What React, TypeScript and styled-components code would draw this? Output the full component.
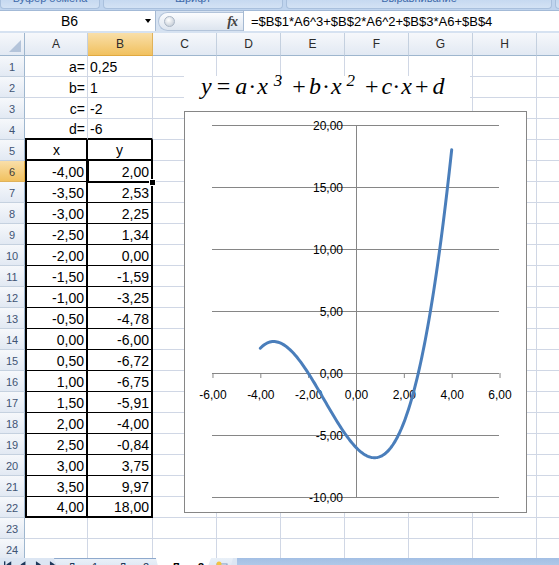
import React from "react";
import styled, { createGlobalStyle, css } from "styled-components";

const GRID = "#d0d7e5";
const CHART_LINE = "#868686";

const GlobalStyle = createGlobalStyle`
  html, body {
    margin: 0;
    padding: 0;
    width: 559px;
    height: 565px;
    overflow: hidden;
    background: #fff;
  }
  body {
    font-family: "Liberation Sans", Arial, sans-serif;
  }
`;

const Window = styled.div`
  width: 559px;
  height: 565px;
  overflow: hidden;
  display: flex;
  flex-direction: column;
  background: #fff;
`;

/* ---------- ribbon group labels (cut off at the top) ---------- */

const RibbonStrip = styled.div`
  flex: none;
  height: 11px;
  display: flex;
  gap: 3px;
  box-sizing: border-box;
  overflow: hidden;
  background: #bfd4ee;
  border-bottom: 1px solid #a3bad7;
`;

const RibbonGroup = styled.div<{ $w: number }>`
  flex: none;
  width: ${(p) => p.$w}px;
  height: 9px;
  box-sizing: border-box;
  border: 1px solid #a9c0dd;
  border-top: none;
  border-radius: 0 0 4px 4px;
  background: linear-gradient(#c6d9f0, #d3e2f4);
  color: #3e6aaa;
  font-size: 11px;
  text-align: center;
  overflow: hidden;
`;

const RibbonLabel = styled.span`
  display: block;
  margin-top: -8px;
  line-height: 13px;
  white-space: nowrap;
`;

/* ---------- formula bar ---------- */

const FormulaBar = styled.div`
  flex: none;
  height: 22px;
  display: flex;
  box-sizing: border-box;
  padding-bottom: 2px;
  background: #d6e2f1;
`;

const NameBox = styled.div`
  flex: none;
  width: 156px;
  display: flex;
  align-items: center;
  background: #fff;
  border-right: 1px solid #a5b9d2;
  box-sizing: border-box;
  font-size: 14px;
`;

const NameText = styled.span`
  width: 139px;
  text-align: center;
`;

const DropArrow = styled.span`
  width: 0;
  height: 0;
  margin-left: 6px;
  border-left: 3.5px solid transparent;
  border-right: 3.5px solid transparent;
  border-top: 4px solid #000;
`;

const Capsule = styled.div`
  flex: none;
  width: 85px;
  margin: 1px 0 0 2px;
  display: flex;
  align-items: center;
  justify-content: space-between;
  box-sizing: border-box;
  padding: 0 6px 0 5px;
  border: 1px solid #b3c4da;
  border-right: none;
  border-radius: 10px 0 0 10px;
  background: linear-gradient(#fbfcfe, #dde5ef);
`;

const Knob = styled.span`
  width: 9px;
  height: 9px;
  border-radius: 50%;
  background: radial-gradient(circle at 40% 35%, #ffffff, #b9c3cf);
  border: 1px solid #aab6c5;
`;

const FxMark = styled.span`
  font-family: "Liberation Serif", "Times New Roman", serif;
  font-style: italic;
  font-weight: bold;
  font-size: 14px;
  color: #444;
  letter-spacing: -1px;
`;

const FormulaInput = styled.div`
  flex: 1;
  display: flex;
  align-items: center;
  padding-left: 7px;
  background: #fff;
  border-left: 1px solid #a5b9d2;
  font-size: 13px;
  white-space: nowrap;
  overflow: hidden;
`;

/* ---------- sheet grid ---------- */

const SheetArea = styled.div`
  position: relative;
  flex: none;
  height: 525px;
  overflow: hidden;
`;

const Grid = styled.div`
  display: grid;
  grid-template-columns: 25px 63px 65px repeat(6, 64px) 60px;
  grid-template-rows: 23px;
  grid-auto-rows: 21px;
  width: max-content;
`;

const headBg = css<{ $active?: boolean }>`
  background: ${(p) =>
    p.$active
      ? "linear-gradient(#f9dfa9, #f1c15f)"
      : "linear-gradient(#f6f8fb, #e2e9f3)"};
`;

const Corner = styled.div`
  position: relative;
  box-sizing: border-box;
  border-right: 1px solid #9eb6ce;
  border-bottom: 1px solid #9eb6ce;
  background: linear-gradient(#f6f8fb, #e2e9f3);
  display: flex;
  align-items: flex-end;
  justify-content: flex-end;
  padding: 0 3px 3px 0;
`;

const ColHead = styled.div<{ $active?: boolean }>`
  ${headBg};
  box-sizing: border-box;
  display: flex;
  align-items: center;
  justify-content: center;
  font-size: 12px;
  color: #2b2b2b;
  border-right: 1px solid ${(p) => (p.$active ? "#e0b25a" : "#c4d0df")};
  border-bottom: 1px solid ${(p) => (p.$active ? "#e0a940" : "#9eb6ce")};
`;

const RowHead = styled.div<{ $active?: boolean }>`
  ${headBg};
  box-sizing: border-box;
  display: flex;
  align-items: center;
  justify-content: center;
  padding-top: 1px;
  font-size: 11px;
  color: ${(p) => (p.$active ? "#3a3a3a" : "#3f5474")};
  border-right: 1px solid ${(p) => (p.$active ? "#e0a940" : "#9eb6ce")};
  border-bottom: 1px solid ${(p) => (p.$active ? "#e0b25a" : "#c5d1df")};
`;

type Edge = "grid" | "thin" | "thick";

const edge = (e?: Edge) =>
  e === "thick" ? "2px solid #000" : e === "thin" ? "1px solid #000" : `1px solid ${GRID}`;

const Cell = styled.div<{
  $align?: "left" | "right" | "center";
  $left?: boolean;
  $right?: Edge;
  $bottom?: Edge;
  $active?: boolean;
}>`
  position: relative;
  box-sizing: border-box;
  display: flex;
  align-items: flex-end;
  justify-content: ${(p) =>
    p.$align === "right" ? "flex-end" : p.$align === "center" ? "center" : "flex-start"};
  padding: 0 2px 1px 2px;
  font-size: 14px;
  line-height: 16px;
  color: #000;
  white-space: nowrap;
  border-left: ${(p) => (p.$left ? "2px solid #000" : "none")};
  border-right: ${(p) => edge(p.$right)};
  border-bottom: ${(p) => edge(p.$bottom)};

  ${(p) =>
    p.$active &&
    css`
      &::after {
        content: "";
        position: absolute;
        top: -2px;
        left: -1px;
        right: -2px;
        bottom: -2px;
        border: 2px solid #000;
        box-shadow: inset 0 0 0 1px #fff;
      }
      &::before {
        content: "";
        position: absolute;
        right: -5px;
        bottom: -5px;
        width: 5px;
        height: 5px;
        background: #000;
        border: 1px solid #fff;
        z-index: 1;
      }
    `}
`;

/* ---------- floating objects ---------- */

const Equation = styled.div`
  position: absolute;
  left: 184px;
  top: 43px;
  width: 286px;
  height: 35px;
  box-sizing: border-box;
  padding-left: 17px;
  background: #fff;
  font-family: "Liberation Serif", "Times New Roman", serif;
  font-style: italic;
  font-size: 24px;
  line-height: 20px;
  color: #000;
  white-space: nowrap;
`;

const Sym = styled.span<{ $gap?: number; $upright?: boolean }>`
  margin-left: ${(p) => p.$gap ?? 0}px;
  font-style: ${(p) => (p.$upright ? "normal" : "italic")};
`;

const Sup = styled.span<{ $gap?: number }>`
  margin-left: ${(p) => p.$gap ?? 0}px;
  font-size: 17px;
  position: relative;
  top: -8px;
`;

const ChartBox = styled.div`
  position: absolute;
  left: 184px;
  top: 78px;
  width: 343px;
  height: 402px;
  box-sizing: border-box;
  border: 1px solid ${CHART_LINE};
  background: #fff;
`;

/* ---------- sheet tabs ---------- */

const TabsBar = styled.div`
  flex: none;
  height: 20px;
  display: flex;
  align-items: flex-start;
  background: linear-gradient(#a3bfe4, #c5d8f0);
`;

const TabsLeft = styled.div`
  flex: none;
  display: flex;
  align-items: flex-start;
  height: 20px;
  background: #dce6f3;
  padding-right: 4px;
`;

const NavGroup = styled.div`
  display: flex;
  gap: 8px;
  width: 58px;
  padding: 2px 0 0 4px;
  box-sizing: border-box;
  border-right: 1px solid #9db3d1;
  height: 20px;
`;

const Tab = styled.div<{ $active?: boolean }>`
  width: 55px;
  margin-left: -4px;
  height: 18px;
  box-sizing: border-box;
  padding: 2px 0 0 ${(p) => (p.$active ? 16 : 14)}px;
  font-size: 11px;
  font-weight: ${(p) => (p.$active ? "bold" : "normal")};
  color: ${(p) => (p.$active ? "#000" : "#1e395b")};
  background: ${(p) => (p.$active ? "#fff" : "linear-gradient(#e9f0f8, #d2dff0)")};
  clip-path: polygon(0 0, 100% 0, 88% 100%, 8% 100%);
  border-top: 1px solid ${(p) => (p.$active ? "#fff" : "#8ea9cd")};
  position: relative;
  z-index: ${(p) => (p.$active ? 2 : 1)};
`;

const NewTab = styled.div`
  width: 24px;
  margin-left: -2px;
  height: 18px;
  padding: 1px 0 0 6px;
  box-sizing: border-box;
  background: linear-gradient(#e9f0f8, #d2dff0);
  clip-path: polygon(0 0, 100% 0, 80% 100%, 0 100%);
`;

/* ---------- data ---------- */

const COLS = ["A", "B", "C", "D", "E", "F", "G", "H", "I"];

const PARAMS: [string, string][] = [
  ["a=", "0,25"],
  ["b=", "1"],
  ["c=", "-2"],
  ["d=", "-6"],
];

const YS = [
  "2,00", "2,53", "2,25", "1,34", "0,00", "-1,59", "-3,25", "-4,78", "-6,00",
  "-6,72", "-6,75", "-5,91", "-4,00", "-0,84", "3,75", "9,97", "18,00",
];

const fmt = (v: number) => v.toFixed(2).replace(".", ",");

const FORMULA = "=$B$1*A6^3+$B$2*A6^2+$B$3*A6+$B$4";

/* ---------- chart ---------- */

const X0 = 171;
const Y0 = 261;
const SX = 23.92;
const SY = 12.4;
const GX1 = 27;
const GX2 = 314;

const f = (x: number) => 0.25 * x ** 3 + x ** 2 - 2 * x - 6;

const Chart: React.FC = () => {
  const pts: string[] = [];
  for (let i = 0; i <= 160; i++) {
    const x = -4 + i * 0.05;
    pts.push(`${(X0 + x * SX).toFixed(2)},${(Y0 - f(x) * SY).toFixed(2)}`);
  }
  const yTicks = [20, 15, 10, 5, 0, -5, -10];
  const xTicks = [-6, -4, -2, 0, 2, 4, 6];
  return (
    <ChartBox>
      <svg width="341" height="400" viewBox="0 0 341 400">
        {yTicks.map((v) => (
          <line
            key={`g${v}`}
            x1={GX1}
            x2={GX2}
            y1={Y0 - v * SY + 0.5}
            y2={Y0 - v * SY + 0.5}
            stroke={CHART_LINE}
            strokeWidth="1"
          />
        ))}
        <line x1={X0 + 0.5} x2={X0 + 0.5} y1={Y0 - 20 * SY} y2={Y0 + 10 * SY} stroke={CHART_LINE} />
        {xTicks.map((v) => (
          <line
            key={`t${v}`}
            x1={X0 + v * SX + 0.5}
            x2={X0 + v * SX + 0.5}
            y1={Y0}
            y2={Y0 + 5}
            stroke={CHART_LINE}
          />
        ))}
        {yTicks.map((v) => (
          <text
            key={`yl${v}`}
            x={158}
            y={Y0 - v * SY + 4.5}
            textAnchor="end"
            fontSize="12"
            fontFamily="Liberation Sans, Arial, sans-serif"
            fill="#000"
          >
            {fmt(v)}
          </text>
        ))}
        {xTicks.map((v) => (
          <text
            key={`xl${v}`}
            x={X0 + v * SX + 0.5}
            y={287}
            textAnchor="middle"
            fontSize="12"
            fontFamily="Liberation Sans, Arial, sans-serif"
            fill="#000"
          >
            {fmt(v)}
          </text>
        ))}
        <polyline
          points={pts.join(" ")}
          fill="none"
          stroke="#4a7ebb"
          strokeWidth="3"
          strokeLinecap="round"
          strokeLinejoin="round"
        />
      </svg>
    </ChartBox>
  );
};

/* ---------- rows ---------- */

const renderRow = (r: number) => {
  const cells: React.ReactNode[] = [];
  cells.push(
    <RowHead key={`h${r}`} $active={r === 6}>
      {r}
    </RowHead>
  );
  const inTable = r >= 5 && r <= 22;
  let a = "";
  let b = "";
  let aAlign: "left" | "right" | "center" = "right";
  let bAlign: "left" | "right" | "center" = "left";
  if (r <= 4) {
    [a, b] = PARAMS[r - 1];
  } else if (r === 5) {
    a = "x";
    b = "y";
    aAlign = "center";
    bAlign = "center";
  } else if (r <= 22) {
    a = fmt(-4 + (r - 6) * 0.5);
    b = YS[r - 6];
    bAlign = "right";
  }
  const bottom: Edge | undefined =
    r === 4 || r === 5 || r === 22 ? "thick" : inTable ? "thin" : undefined;
  cells.push(
    <Cell key={`a${r}`} $align={aAlign} $left={inTable} $right={inTable ? "thick" : undefined} $bottom={bottom}>
      {a}
    </Cell>
  );
  cells.push(
    <Cell key={`b${r}`} $align={bAlign} $right={inTable ? "thick" : undefined} $bottom={bottom} $active={r === 6}>
      {b}
    </Cell>
  );
  for (let c = 2; c < COLS.length; c++) cells.push(<Cell key={`${COLS[c]}${r}`} />);
  return cells;
};

const NavArrows: React.FC = () => (
  <NavGroup>
    <svg width="9" height="9" viewBox="0 0 9 9">
      <rect x="0" y="1" width="1.5" height="7" fill="#1e395b" />
      <polygon points="8,1 8,8 2.5,4.5" fill="#1e395b" />
    </svg>
    <svg width="7" height="9" viewBox="0 0 7 9">
      <polygon points="6,1 6,8 0.5,4.5" fill="#1e395b" />
    </svg>
    <svg width="7" height="9" viewBox="0 0 7 9">
      <polygon points="1,1 1,8 6.5,4.5" fill="#1e395b" />
    </svg>
    <svg width="9" height="9" viewBox="0 0 9 9">
      <polygon points="1,1 1,8 6.5,4.5" fill="#1e395b" />
      <rect x="7.5" y="1" width="1.5" height="7" fill="#1e395b" />
    </svg>
  </NavGroup>
);

const App: React.FC = () => (
  <Window>
    <GlobalStyle />
    <RibbonStrip>
      <RibbonGroup $w={100}>
        <RibbonLabel>Буфер обмена</RibbonLabel>
      </RibbonGroup>
      <RibbonGroup $w={180}>
        <RibbonLabel>Шрифт</RibbonLabel>
      </RibbonGroup>
      <RibbonGroup $w={266}>
        <RibbonLabel>Выравнивание</RibbonLabel>
      </RibbonGroup>
      <RibbonGroup $w={60} />
    </RibbonStrip>

    <FormulaBar>
      <NameBox>
        <NameText>B6</NameText>
        <DropArrow />
      </NameBox>
      <Capsule>
        <Knob />
        <FxMark>fx</FxMark>
      </Capsule>
      <FormulaInput>{FORMULA}</FormulaInput>
    </FormulaBar>

    <SheetArea>
      <Grid>
        <Corner>
          <svg width="12" height="12" viewBox="0 0 12 12">
            <polygon points="12,0 12,12 0,12" fill="#b4c4da" />
          </svg>
        </Corner>
        {COLS.map((c) => (
          <ColHead key={c} $active={c === "B"}>
            {c}
          </ColHead>
        ))}
        {Array.from({ length: 24 }, (_, i) => renderRow(i + 1))}
      </Grid>

      <Equation>
        <Sym>y</Sym>
        <Sym $gap={5} $upright>=</Sym>
        <Sym $gap={5}>a</Sym>
        <Sym $gap={1} $upright>·</Sym>
        <Sym $gap={1}>x</Sym>
        <Sup $gap={6}>3</Sup>
        <Sym $gap={10} $upright>+</Sym>
        <Sym $gap={3}>b</Sym>
        <Sym $gap={1} $upright>·</Sym>
        <Sym $gap={1}>x</Sym>
        <Sup $gap={5}>2</Sup>
        <Sym $gap={10} $upright>+</Sym>
        <Sym $gap={3}>c</Sym>
        <Sym $upright>·</Sym>
        <Sym $gap={1}>x</Sym>
        <Sym $gap={3} $upright>+</Sym>
        <Sym $gap={4}>d</Sym>
      </Equation>

      <Chart />
    </SheetArea>

    <TabsBar>
      <TabsLeft>
        <NavArrows />
        <Tab>Лист1</Tab>
        <Tab>Лист2</Tab>
        <Tab $active>Лист3</Tab>
        <NewTab>
          <svg width="14" height="12" viewBox="0 0 14 12">
            <rect x="2" y="3" width="10" height="9" fill="#fff" stroke="#7d97bd" />
            <circle cx="4" cy="3" r="2.5" fill="#f2c341" />
          </svg>
        </NewTab>
      </TabsLeft>
    </TabsBar>
  </Window>
);

export default App;
